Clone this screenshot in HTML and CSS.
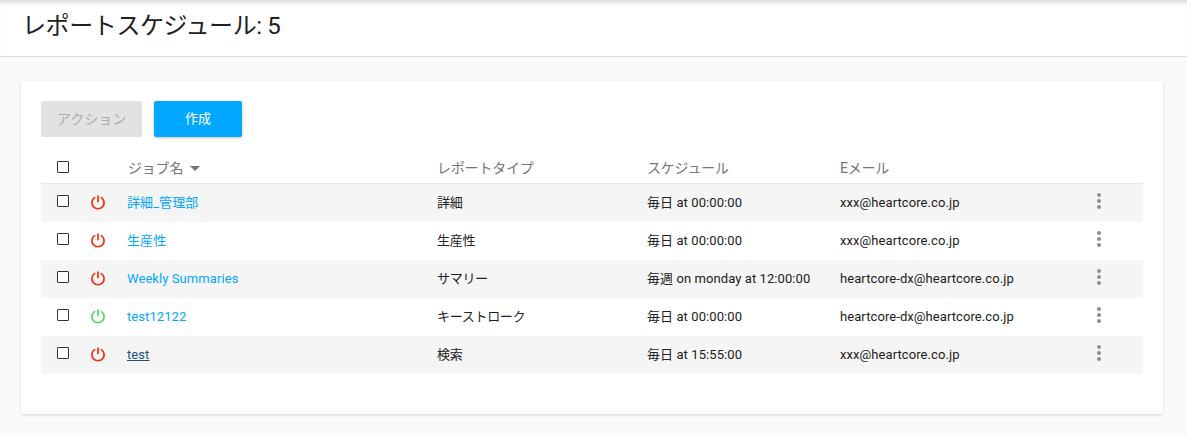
FILE: index.html
```html
<!DOCTYPE html>
<html lang="ja">
<head>
<meta charset="utf-8">
<title>レポートスケジュール</title>
<link rel="stylesheet" href="styles.css">
</head>
<body>
<header class="topbar"><h1 class="title">レポートスケジュール: 5</h1></header>
<main class="content">
  <section class="card">
    <div class="actions">
      <button class="btn btn-disabled">アクション</button>
      <button class="btn btn-primary">作成</button>
    </div>
    <div class="row head">
      <span class="c-check"><span class="box"></span></span>
      <span class="c-power"></span>
      <span class="c-name">ジョブ名<i class="caret"></i></span>
      <span class="c-type">レポートタイプ</span>
      <span class="c-sched">スケジュール</span>
      <span class="c-mail">Eメール</span>
    </div>
    <div class="row body">
      <span class="c-check"><span class="box"></span></span>
      <span class="c-power"><svg class="power off" viewBox="0 0 16 16"><path d="M8 2v5.6M4.6 3.6a6.1 6.1 0 1 0 6.8 0"/></svg></span>
      <span class="c-name"><a class="link">詳細_管理部</a></span>
      <span class="c-type cjk">詳細</span>
      <span class="c-sched">毎日 at 00:00:00</span>
      <span class="c-mail">xxx@heartcore.co.jp</span>
      <span class="dots"><b></b><b></b><b></b></span>
    </div>
    <div class="row body">
      <span class="c-check"><span class="box"></span></span>
      <span class="c-power"><svg class="power off" viewBox="0 0 16 16"><path d="M8 2v5.6M4.6 3.6a6.1 6.1 0 1 0 6.8 0"/></svg></span>
      <span class="c-name"><a class="link">生産性</a></span>
      <span class="c-type cjk">生産性</span>
      <span class="c-sched">毎日 at 00:00:00</span>
      <span class="c-mail">xxx@heartcore.co.jp</span>
      <span class="dots"><b></b><b></b><b></b></span>
    </div>
    <div class="row body">
      <span class="c-check"><span class="box"></span></span>
      <span class="c-power"><svg class="power off" viewBox="0 0 16 16"><path d="M8 2v5.6M4.6 3.6a6.1 6.1 0 1 0 6.8 0"/></svg></span>
      <span class="c-name"><a class="link">Weekly Summaries</a></span>
      <span class="c-type cjk">サマリー</span>
      <span class="c-sched">毎週 on monday at 12:00:00</span>
      <span class="c-mail">heartcore-dx@heartcore.co.jp</span>
      <span class="dots"><b></b><b></b><b></b></span>
    </div>
    <div class="row body">
      <span class="c-check"><span class="box"></span></span>
      <span class="c-power"><svg class="power on" viewBox="0 0 16 16"><path d="M8 2v5.6M4.6 3.6a6.1 6.1 0 1 0 6.8 0"/></svg></span>
      <span class="c-name"><a class="link">test12122</a></span>
      <span class="c-type cjk">キーストローク</span>
      <span class="c-sched">毎日 at 00:00:00</span>
      <span class="c-mail">heartcore-dx@heartcore.co.jp</span>
      <span class="dots"><b></b><b></b><b></b></span>
    </div>
    <div class="row body">
      <span class="c-check"><span class="box"></span></span>
      <span class="c-power"><svg class="power off" viewBox="0 0 16 16"><path d="M8 2v5.6M4.6 3.6a6.1 6.1 0 1 0 6.8 0"/></svg></span>
      <span class="c-name"><a class="link visited">test</a></span>
      <span class="c-type cjk">検索</span>
      <span class="c-sched">毎日 at 15:55:00</span>
      <span class="c-mail">xxx@heartcore.co.jp</span>
      <span class="dots"><b></b><b></b><b></b></span>
    </div>
  </section>
</main>
</body>
</html>
```
FILE: styles.css
```css
* { box-sizing: border-box; }
html, body { margin: 0; height: 100%; }
body {
  background: #fafafa;
  font-family: Roboto, "Noto Sans CJK JP", sans-serif;
  color: #212121;
  overflow: hidden;
}
.topbar {
  height: 57px;
  background: #fff;
  border-bottom: 1px solid #dcdcdc;
  box-shadow: inset 0 5px 5px -3px rgba(0,0,0,.18);
  padding: 11px 0 0 22px;
}
.title {
  margin: 0;
  font-size: 24px;
  font-weight: 400;
  line-height: 30px;
  letter-spacing: -.4px;
  color: #212121;
}
.content { padding: 24px 24px 0 21px; }
.card {
  width: 1142px;
  height: 333px;
  background: #fff;
  border-radius: 3px;
  box-shadow: 0 1px 3px rgba(0,0,0,.16);
  padding: 20px;
}
.actions { display: flex; gap: 12px; margin-bottom: 14px; }
.btn {
  height: 36px;
  border: 0;
  border-radius: 2px;
  font: 14px/34px Roboto, "Noto Sans CJK JP", sans-serif;
  padding: 0 0 1px;
}
.btn-disabled { width: 101px; background: #e2e2e2; color: #adadad; }
.btn-primary { width: 88px; background: #00a8ff; color: #fff; font-size: 13px; box-shadow: 0 1px 3px rgba(0,0,0,.25); }
.row {
  display: flex;
  align-items: center;
  font-size: 13px;
  line-height: 18px;
  width: 1102px;
}
.head {
  height: 33px;
  color: #757575;
  font-size: 14px;
  letter-spacing: -.2px;
  border-bottom: 1px solid #e6e6e6;
  padding-top: 2px;
}
.body { height: 38px; letter-spacing: .08px; padding-bottom: 2px; }
.body:nth-of-type(odd) { background: #f5f5f5; }
.c-check { width: 48px; padding-left: 16px; display: flex; padding-bottom: 2px; }
.c-power { width: 38px; display: flex; }
.c-name { width: 310px; }
.c-type { width: 210px; }
.c-sched { width: 193px; }
.c-mail { width: 250px; }
.body .c-name, .body .c-type, .body .c-sched, .body .c-mail { padding-top: 2px; }
.head .c-check { padding-bottom: 3px; }
.head .c-name { padding-left: 1px; }
.cjk { letter-spacing: -.3px; }
.box {
  width: 12px;
  height: 12px;
  border: 1.5px solid #333;
  border-radius: 1px;
  background: #fff;
}
.power {
  width: 16px;
  height: 16px;
  fill: none;
  stroke-width: 1.7;
  stroke-linecap: round;
  margin-left: 1px;
}
.off { stroke: #fa2a0a; }
.on { stroke: #4cd964; }
.link { color: #00a8ff; }
.visited { color: #23527c; text-decoration: underline; }
.caret {
  display: inline-block;
  margin-left: 7px;
  border-left: 5px solid transparent;
  border-right: 5px solid transparent;
  border-top: 5px solid #757575;
  vertical-align: 2px;
}
.dots {
  display: flex;
  flex-direction: column;
  gap: 2px;
  margin-left: 7px;
  padding-bottom: 2px;
}
.dots b {
  width: 4px;
  height: 4px;
  border-radius: 50%;
  background: #8e8e8e;
}
```
